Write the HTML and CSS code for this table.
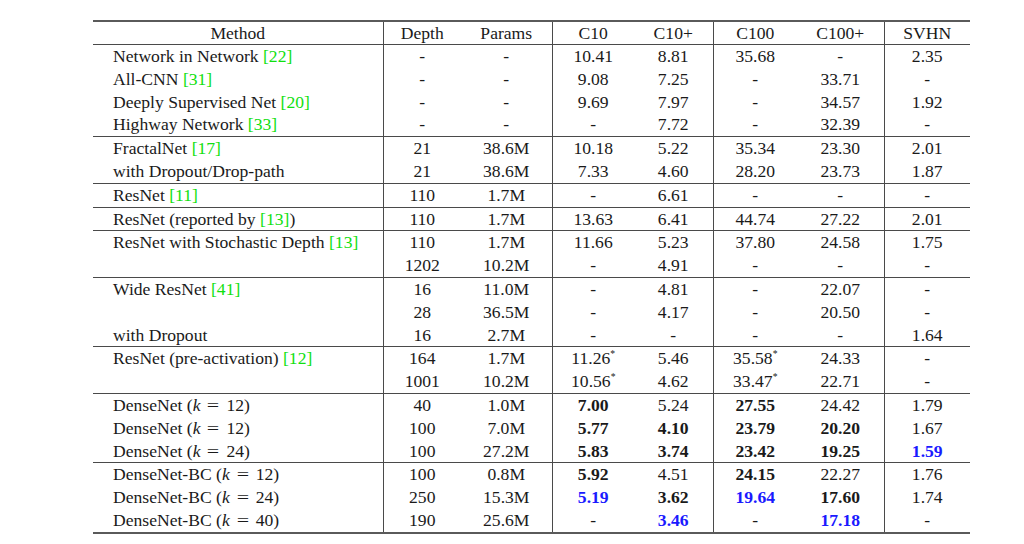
FILE: index.html
```html
<!DOCTYPE html>
<html>
<head>
<meta charset="utf-8">
<link rel="stylesheet" href="styles.css">
</head>
<body>
<div class="page">
<table class="results">
  <colgroup>
    <col class="c-method"><col class="c-depth"><col class="c-params"><col class="c-c10"><col class="c-c10p"><col class="c-c100"><col class="c-c100p"><col class="c-svhn">
  </colgroup>
  <thead>
    <tr><th class="method-h sep">Method</th><th>Depth</th><th class="sep">Params</th><th>C10</th><th class="sep">C10+</th><th>C100</th><th class="sep">C100+</th><th>SVHN</th></tr>
  </thead>
  <tbody>
    <tr><td class="m sep">Network in Network <span class="cite">[22]</span></td><td>-</td><td class="sep">-</td><td>10.41</td><td class="sep">8.81</td><td>35.68</td><td class="sep">-</td><td>2.35</td></tr>
    <tr><td class="m sep">All-CNN <span class="cite">[31]</span></td><td>-</td><td class="sep">-</td><td>9.08</td><td class="sep">7.25</td><td>-</td><td class="sep">33.71</td><td>-</td></tr>
    <tr><td class="m sep">Deeply Supervised Net <span class="cite">[20]</span></td><td>-</td><td class="sep">-</td><td>9.69</td><td class="sep">7.97</td><td>-</td><td class="sep">34.57</td><td>1.92</td></tr>
    <tr><td class="m sep">Highway Network <span class="cite">[33]</span></td><td>-</td><td class="sep">-</td><td>-</td><td class="sep">7.72</td><td>-</td><td class="sep">32.39</td><td>-</td></tr>
  </tbody>
  <tbody>
    <tr><td class="m sep">FractalNet <span class="cite">[17]</span></td><td>21</td><td class="sep">38.6M</td><td>10.18</td><td class="sep">5.22</td><td>35.34</td><td class="sep">23.30</td><td>2.01</td></tr>
    <tr><td class="m sep">with Dropout/Drop-path</td><td>21</td><td class="sep">38.6M</td><td>7.33</td><td class="sep">4.60</td><td>28.20</td><td class="sep">23.73</td><td>1.87</td></tr>
  </tbody>
  <tbody>
    <tr><td class="m sep">ResNet <span class="cite">[11]</span></td><td>110</td><td class="sep">1.7M</td><td>-</td><td class="sep">6.61</td><td>-</td><td class="sep">-</td><td>-</td></tr>
  </tbody>
  <tbody>
    <tr><td class="m sep">ResNet (reported by <span class="cite">[13]</span>)</td><td>110</td><td class="sep">1.7M</td><td>13.63</td><td class="sep">6.41</td><td>44.74</td><td class="sep">27.22</td><td>2.01</td></tr>
  </tbody>
  <tbody>
    <tr><td class="m sep">ResNet with Stochastic Depth <span class="cite">[13]</span></td><td>110</td><td class="sep">1.7M</td><td>11.66</td><td class="sep">5.23</td><td>37.80</td><td class="sep">24.58</td><td>1.75</td></tr>
    <tr><td class="m sep"></td><td>1202</td><td class="sep">10.2M</td><td>-</td><td class="sep">4.91</td><td>-</td><td class="sep">-</td><td>-</td></tr>
  </tbody>
  <tbody>
    <tr><td class="m sep">Wide ResNet <span class="cite">[41]</span></td><td>16</td><td class="sep">11.0M</td><td>-</td><td class="sep">4.81</td><td>-</td><td class="sep">22.07</td><td>-</td></tr>
    <tr><td class="m sep"></td><td>28</td><td class="sep">36.5M</td><td>-</td><td class="sep">4.17</td><td>-</td><td class="sep">20.50</td><td>-</td></tr>
    <tr><td class="m sep">with Dropout</td><td>16</td><td class="sep">2.7M</td><td>-</td><td class="sep">-</td><td>-</td><td class="sep">-</td><td>1.64</td></tr>
  </tbody>
  <tbody>
    <tr><td class="m sep">ResNet (pre-activation) <span class="cite">[12]</span></td><td>164</td><td class="sep">1.7M</td><td>11.26<sup class="ast">*</sup></td><td class="sep">5.46</td><td>35.58<sup class="ast">*</sup></td><td class="sep">24.33</td><td>-</td></tr>
    <tr><td class="m sep"></td><td>1001</td><td class="sep">10.2M</td><td>10.56<sup class="ast">*</sup></td><td class="sep">4.62</td><td>33.47<sup class="ast">*</sup></td><td class="sep">22.71</td><td>-</td></tr>
  </tbody>
  <tbody>
    <tr><td class="m sep">DenseNet (<i>k</i><span class="eq">=</span>12)</td><td>40</td><td class="sep">1.0M</td><td><b>7.00</b></td><td class="sep">5.24</td><td><b>27.55</b></td><td class="sep">24.42</td><td>1.79</td></tr>
    <tr><td class="m sep">DenseNet (<i>k</i><span class="eq">=</span>12)</td><td>100</td><td class="sep">7.0M</td><td><b>5.77</b></td><td class="sep"><b>4.10</b></td><td><b>23.79</b></td><td class="sep"><b>20.20</b></td><td>1.67</td></tr>
    <tr><td class="m sep">DenseNet (<i>k</i><span class="eq">=</span>24)</td><td>100</td><td class="sep">27.2M</td><td><b>5.83</b></td><td class="sep"><b>3.74</b></td><td><b>23.42</b></td><td class="sep"><b>19.25</b></td><td><b class="best">1.59</b></td></tr>
  </tbody>
  <tbody class="last">
    <tr><td class="m sep">DenseNet-BC (<i>k</i><span class="eq">=</span>12)</td><td>100</td><td class="sep">0.8M</td><td><b>5.92</b></td><td class="sep">4.51</td><td><b>24.15</b></td><td class="sep">22.27</td><td>1.76</td></tr>
    <tr><td class="m sep">DenseNet-BC (<i>k</i><span class="eq">=</span>24)</td><td>250</td><td class="sep">15.3M</td><td><b class="best">5.19</b></td><td class="sep"><b>3.62</b></td><td><b class="best">19.64</b></td><td class="sep"><b>17.60</b></td><td>1.74</td></tr>
    <tr><td class="m sep">DenseNet-BC (<i>k</i><span class="eq">=</span>40)</td><td>190</td><td class="sep">25.6M</td><td>-</td><td class="sep"><b class="best">3.46</b></td><td>-</td><td class="sep"><b class="best">17.18</b></td><td>-</td></tr>
  </tbody>
</table>
</div>
</body>
</html>
```

FILE: styles.css
```css
html, body {
  margin: 0;
  padding: 0;
  background: #ffffff;
}

.page {
  padding: 20px 0 0 93px;
}

.results {
  border-collapse: collapse;
  table-layout: fixed;
  width: 877px;
  font-family: "Liberation Serif", "Times New Roman", serif;
  font-size: 17.6px;
  color: #1a1a1a;
  border-top: 2px solid #5a5a5a;
  border-bottom: 2px solid #5a5a5a;
}

.c-method { width: 290px; }
.c-depth { width: 78px; }
.c-params { width: 91px; }
.c-c10 { width: 82px; }
.c-c10p { width: 79px; }
.c-c100 { width: 84px; }
.c-c100p { width: 87px; }
.c-svhn { width: 86px; }

.results th,
.results td {
  padding: 0;
  height: 22.8px;
  line-height: 22.8px;
  text-align: center;
  white-space: nowrap;
  font-weight: normal;
}

.results thead th {
  height: 22px;
  line-height: 22px;
  border-bottom: 1px solid #4a4a4a;
}

.results tbody {
  border-top: 1px solid #4a4a4a;
}

.results .sep {
  border-right: 1px solid #4a4a4a;
}

.results td.m {
  text-align: left;
  padding-left: 20px;
}

.cite {
  color: #10e010;
}

.results b {
  font-weight: bold;
}

.results .best {
  color: #1a1aff;
}

.ast {
  font-size: 0.55em;
  line-height: 0;
  vertical-align: 0.75em;
}

.results i {
  font-style: italic;
  margin-right: 1px;
}

.eq {
  display: inline-block;
  margin: 0 8px 0 7px;
  transform: scaleX(1.25);
}
```
